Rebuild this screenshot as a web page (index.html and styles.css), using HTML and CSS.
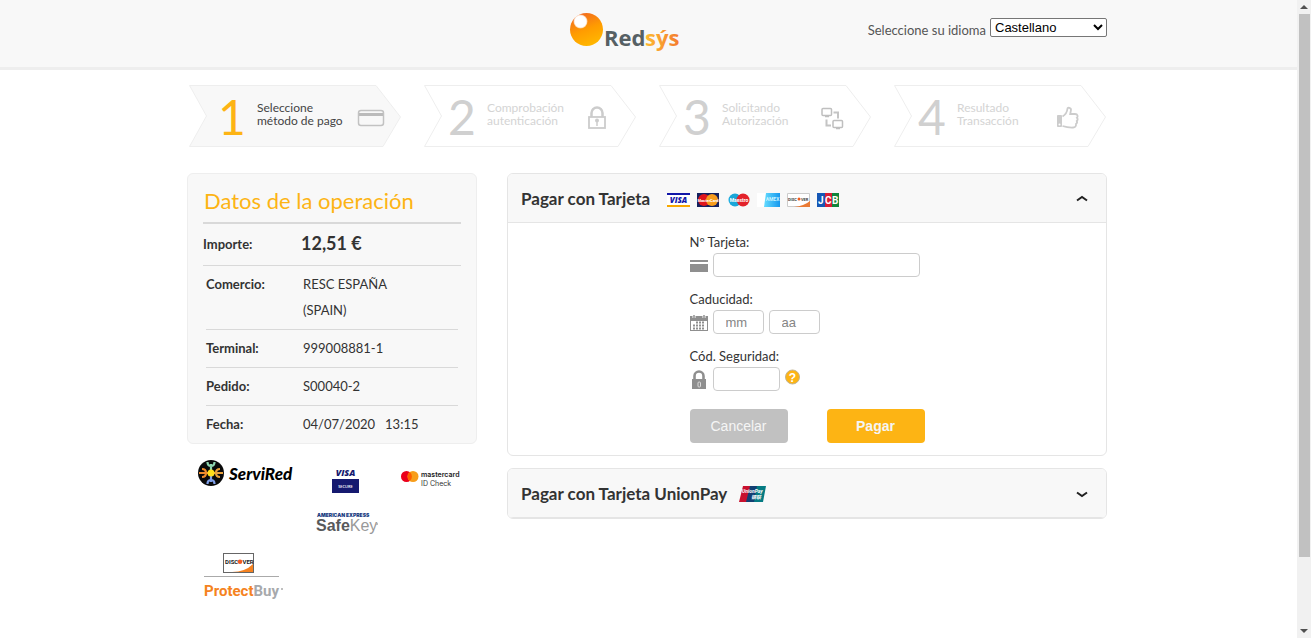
FILE: index.html
```html
<!DOCTYPE html>
<html lang="es">
<head>
<meta charset="utf-8">
<title>Redsys</title>
<link rel="stylesheet" href="styles.css">
</head>
<body>
<div class="page">
  <header class="header">
    <div class="wrap header-inner">
      <svg class="logo" viewBox="0 0 112 42" role="img" aria-label="Redsýs">
        <defs>
          <linearGradient id="ball" x1="0.7" y1="1" x2="0.3" y2="0"><stop offset="0" stop-color="#ffb900"/><stop offset="0.5" stop-color="#ff9c00"/><stop offset="1" stop-color="#f26a21"/></linearGradient>
          <linearGradient id="sys" x1="0" y1="0" x2="1" y2="0"><stop offset="0" stop-color="#fdbb30"/><stop offset="1" stop-color="#f47b30"/></linearGradient>
          <radialGradient id="shine"><stop offset="0.8" stop-color="#fff"/><stop offset="1" stop-color="#fff" stop-opacity="0.5"/></radialGradient>
        </defs>
        <circle cx="17.500" cy="17.500" r="16.500" fill="url(#ball)"/>
        <circle cx="11.500" cy="9.500" r="7" fill="url(#shine)"/>
        <text x="35" y="34" class="logo-text" fill="#566064">Red</text>
        <text x="76" y="34" class="logo-text" fill="url(#sys)">sýs</text>
      </svg>
      <div class="language">
        <label for="idioma">Seleccione su idioma</label>
        <select id="idioma" class="language-select"><option>Castellano</option></select>
      </div>
    </div>
  </header>

  <main class="wrap">
    <ol class="steps">
      <li class="step active">
        <svg class="step-shape" viewBox="0 0 212 62" preserveAspectRatio="none"><path d="M.5.5H187L211.500 32 194 61.500H.5L17.500 31Z"/></svg>
        <div class="step-content"><span class="step-number">1</span><span class="step-label">Seleccione<br>método de pago</span>
          <svg class="step-icon" viewBox="0 0 28 24"><rect x="1.500" y="4.500" width="25" height="15" rx="2.500" fill="none" stroke="#c2c2c2" stroke-width="1.500"/><path d="M2 8.500h24" stroke="#bbb" stroke-width="3"/></svg></div>
      </li>
      <li class="step">
        <svg class="step-shape" viewBox="0 0 212 62" preserveAspectRatio="none"><path d="M.5.5H187L211.500 32 194 61.500H.5L17.500 31Z"/></svg>
        <div class="step-content"><span class="step-number">2</span><span class="step-label">Comprobación<br>autenticación</span>
          <svg class="step-icon" viewBox="0 0 28 24"><path d="M7.500 11V7a5.500 5.500 0 0 1 11 0v4" fill="none" stroke="#ccc" stroke-width="2.500"/><rect x="5" y="11" width="16" height="11" fill="none" stroke="#ccc" stroke-width="1.800"/><circle cx="13" cy="14.500" r="2" fill="#ccc"/><path d="M13 14v6" stroke="#ccc" stroke-width="1.500"/></svg></div>
      </li>
      <li class="step">
        <svg class="step-shape" viewBox="0 0 212 62" preserveAspectRatio="none"><path d="M.5.5H187L211.500 32 194 61.500H.5L17.500 31Z"/></svg>
        <div class="step-content"><span class="step-number">3</span><span class="step-label">Solicitando<br>Autorización</span>
          <svg class="step-icon" viewBox="0 0 28 24"><g fill="none" stroke="#bfbfbf" stroke-width="1.500"><rect x="3" y="2.500" width="9.500" height="7" rx="1"/><rect x="14" y="14.500" width="9.500" height="7" rx="1"/></g><path d="M14.500 6.500h4.500v6M7.500 13.500v6h4.500" fill="none" stroke="#c4c4c4" stroke-width="2"/><path d="M6 10.500h4M17 22.500h4" stroke="#bfbfbf" stroke-width="1.500"/></svg></div>
      </li>
      <li class="step">
        <svg class="step-shape" viewBox="0 0 212 62" preserveAspectRatio="none"><path d="M.5.5H187L211.500 32 194 61.500H.5L17.500 31Z"/></svg>
        <div class="step-content"><span class="step-number">4</span><span class="step-label">Resultado<br>Transacción</span>
          <svg class="step-icon" viewBox="0 0 28 24"><path d="M3.500 9.500h4v11h-4z" fill="#ccc" stroke="#ccc"/><circle cx="5.500" cy="18.500" r="1" fill="#fff"/><path d="M8.500 10.500C11 9 13 7.500 13.500 2.500c.1-1.200 3.700-1.200 3.500 1.500L16.200 8H21c3 0 3 3 2 3.800 1 1 .8 2.300-.2 3.200.6 1.200.2 2.300-.8 3 .3 2-.8 3.500-2.800 3.500-4.500.2-6.700-.2-10.700-1.500" fill="none" stroke="#ccc" stroke-width="1.800"/></svg></div>
      </li>
    </ol>

    <div class="columns">
      <aside class="sidebar">
        <section class="summary">
          <h1 class="summary-title">Datos de la operación</h1>
          <table class="data amount"><tr><th scope="row">Importe:</th><td>12,51 €</td></tr></table>
          <table class="data details">
            <tr><th scope="row">Comercio:</th><td>RESC ESPAÑA<br>(SPAIN)</td></tr>
            <tr><th scope="row">Terminal:</th><td>999008881-1</td></tr>
            <tr><th scope="row">Pedido:</th><td>S00040-2</td></tr>
            <tr><th scope="row">Fecha:</th><td>04/07/2020 &nbsp;&nbsp;13:15</td></tr>
          </table>
        </section>
        <div class="seals">
          <svg class="seal-top" width="98" height="40" viewBox="0 0 98 40" role="img" aria-label="ServiRed">
            <circle cx="13" cy="14" r="13" fill="#0a0a0a"/>
            <g fill="none" stroke-width="2.200"><g stroke="#8fd6b0"><path d="M13 11V5M9.500 3q0 4 3.500 4t3.500-4"/></g><g stroke="#7f9fe8"><path d="M13 17v6M9.500 25q0-4 3.500-4t3.500 4"/></g><g stroke="#ef8c2c"><path d="M10 14H1M4 10q4 0 4 4t-4 4"/></g><g stroke="#e9a13b"><path d="M16 14h9M22 10q-4 0-4 4t4 4"/></g></g>
            <circle cx="13" cy="14" r="3.500" fill="#ffdf1b"/>
            <text x="31" y="21" class="t-servired">ServiRed</text>
          </svg>
          <svg class="seal-top" width="30" height="40" viewBox="0 0 30 40" role="img" aria-label="Visa Secure">
            <text x="13.500" y="17" text-anchor="middle" class="t-visa">VISA</text><rect x="0" y="20" width="27" height="14" fill="#15196f"/><text x="13.500" y="29" text-anchor="middle" class="t-secure">SECURE</text>
          </svg>
          <svg class="seal-top" width="64" height="40" viewBox="0 0 64 40" role="img" aria-label="Mastercard ID Check">
            <circle cx="6.500" cy="17.500" r="5.500" fill="#eb001b"/><circle cx="13" cy="17.500" r="5.500" fill="#f79e1b"/><path d="M9.750 13.100a5.500 5.500 0 0 1 0 8.800 5.500 5.500 0 0 1 0-8.800" fill="#ff5f00"/>
            <text x="21" y="18" class="t-mc">mastercard</text><text x="21" y="27" class="t-id">ID Check</text>
          </svg>
          <svg class="seal-middle" width="64" height="24" viewBox="0 0 64 24" role="img" aria-label="American Express SafeKey">
            <text x="2" y="6" class="t-amex">AMERICAN EXPRESS</text><text x="1" y="20" class="t-safe">Safe<tspan class="t-key">Key</tspan></text><circle cx="62" cy="13" r="1" fill="#aaa"/>
          </svg>
          <svg class="seal-bottom" width="86" height="54" viewBox="0 0 86 54" role="img" aria-label="Discover ProtectBuy">
            <rect x="19.500" y="6.500" width="30" height="19" fill="#fff" stroke="#666"/><path d="M28 25q13 0 21-8V25Z" fill="#f58220"/><text x="21" y="17" class="t-discover">DISC</text><circle cx="36" cy="14.800" r="2.300" fill="#f15a22"/><text x="38.500" y="17" class="t-discover">VER</text>
            <path d="M0 29.500h75" stroke="#aaa"/><text x="0" y="49" class="t-protect">Protect<tspan class="t-buy">Buy</tspan></text><circle cx="78" cy="42" r="1" fill="#aaa"/>
          </svg>
        </div>
      </aside>

      <div class="payments">
        <section class="panel">
          <header class="panel-head">
            <h2 class="panel-title">Pagar con Tarjeta</h2>
            <div class="cards">
              <svg class="card" viewBox="0 0 24 14"><path fill="#fff" d="M0 0h23v14H0z"/><path fill="#1116a8" d="M0 0h23v2H0z"/><path fill="#f7a800" d="M0 12h23v2H0z"/><text x="11.500" y="10" text-anchor="middle" class="c-visa">VISA</text></svg>
              <svg class="card" viewBox="0 0 24 14"><path fill="#14205e" d="M0 0h22v14H0z"/><circle cx="7" cy="7" r="6" fill="#e0161c"/><circle cx="15" cy="7" r="6" fill="#f89c1c"/><text x="11" y="8.500" text-anchor="middle" class="c-brand">MasterCard</text></svg>
              <svg class="card" viewBox="0 0 24 14"><circle cx="8" cy="7" r="6.500" fill="#1aa7d8"/><circle cx="16" cy="7" r="6.500" fill="#e3222a"/><text x="12" y="9" text-anchor="middle" class="c-maestro">Maestro</text></svg>
              <svg class="card" viewBox="0 0 24 14"><defs><linearGradient id="amx"><stop offset="0" stop-color="#65dcff"/><stop offset="1" stop-color="#1698ee"/></linearGradient></defs><path fill="#fff" d="M0 0h9v14H0z"/><path fill="url(#amx)" d="M9 0h14v14H7z"/><text x="15.500" y="8" text-anchor="middle" class="c-amex">AMEX</text></svg>
              <svg class="card" viewBox="0 0 24 14"><path fill="#fff" stroke="#ccc" d="M.5.5h22v13H.5z"/><path d="M7 14q10-1 16-6v6Z" fill="#ea7b35"/><text x="1" y="7.500" class="c-disc">DISC</text><circle cx="12" cy="6" r="1.500" fill="#ef5b1b"/><text x="14" y="7.500" class="c-disc">VER</text></svg>
              <svg class="card" viewBox="0 0 24 14"><path fill="#1557b5" d="M0 0h8v14H0z"/><path fill="#d81e35" d="M8 0h7v14H8z"/><path fill="#11853b" d="M15 0h7v14h-7z"/><text y="11" class="c-jcb"><tspan x="1">J</tspan><tspan x="8">C</tspan><tspan x="15">B</tspan></text></svg>
            </div>
            <button class="toggle" type="button" aria-label="Contraer"><svg width="12" height="8" viewBox="0 0 12 8"><path d="m1 5.500 5-3.500 5 3.500"/></svg></button>
          </header>
          <form class="card-form">
            <div class="field">
              <label for="numero">Nº Tarjeta:</label>
              <div class="control"><svg class="field-icon" viewBox="0 0 18 24"><path d="M0 7h18v2H0zm0 4h18v8H0z" fill="#8f8f8f"/></svg><input id="numero" class="input input-number" type="text"></div>
            </div>
            <div class="field">
              <label for="mes">Caducidad:</label>
              <div class="control"><svg class="field-icon" viewBox="0 0 18 24"><path d="M0 6h18v15H0z" fill="#8f8f8f"/><path d="M1 11h16v9H1z" fill="#fff"/><path d="M6 12.500h9M3 15.500h12M3 18.500h12" stroke="#8f8f8f" stroke-width="2" stroke-dasharray="2 1"/><path d="M4 4.500v3.500M14 4.500v3.500" stroke="#fff" stroke-width="3"/><path d="M4 5v3M14 5v3" stroke="#8f8f8f" stroke-width="1.500"/></svg><input id="mes" class="input input-date" type="text" placeholder="mm"><input class="input input-date" type="text" placeholder="aa" aria-label="Año"></div>
            </div>
            <div class="field">
              <label for="codigo">Cód. Seguridad:</label>
              <div class="control"><svg class="field-icon" viewBox="0 0 18 24"><path d="M4.500 13V9a4.500 4.500 0 0 1 9 0v4" fill="none" stroke="#8f8f8f" stroke-width="2.600"/><path d="M2 12h14v10H2z" fill="#8f8f8f"/><rect x="8" y="15" width="2.500" height="5" rx="1" fill="none" stroke="#ddd"/></svg><input id="codigo" class="input input-code" type="text"><button class="help" type="button" aria-label="Ayuda"><svg width="16" height="16" viewBox="0 0 16 16"><circle cx="7.500" cy="8" r="7" fill="#fdb414" stroke="#c2b491"/><text x="7.500" y="12.500" text-anchor="middle" class="help-mark">?</text></svg></button></div>
            </div>
            <div class="actions"><button class="button cancel" type="button">Cancelar</button><button class="button pay" type="button">Pagar</button></div>
          </form>
        </section>
        <section class="panel closed">
          <header class="panel-head">
            <h2 class="panel-title">Pagar con Tarjeta UnionPay</h2>
            <svg class="unionpay" viewBox="0 0 28 16" role="img" aria-label="UnionPay"><path fill="#c8102e" d="M4 0h8L9 16H0z"/><path fill="#123f73" d="M11 0h8l-3 16H7z"/><path fill="#057b83" d="M18 0h9l-3 16h-9z"/><text x="3" y="7" class="c-union">UnionPay</text><text x="12" y="13" class="c-union">银联</text></svg>
            <button class="toggle" type="button" aria-label="Desplegar"><svg width="12" height="8" viewBox="0 0 12 8"><path d="m1 2.500 5 3.500 5-3.500"/></svg></button>
          </header>
        </section>
      </div>
    </div>
  </main>
</div>
<div class="scrollbar" aria-hidden="true">
  <svg width="14" height="14" viewBox="0 0 14 14"><path d="m3 9 4-4 4 4z" fill="#505050"/></svg>
  <div class="scroll-track"><div class="scroll-thumb"></div></div>
  <svg width="14" height="14" viewBox="0 0 14 14"><path d="m3 5 4 4 4-4z" fill="#505050"/></svg>
</div>
</body>
</html>
```
FILE: styles.css
```css
* { box-sizing: border-box; }
body {
  margin: 0;
  display: flex;
  background: #fff;
  color: #333;
  font: 13px/20px Lato, "Liberation Sans", sans-serif;
}
.page { flex: 1; min-width: 0; }
.wrap { max-width: 923px; margin: 0 auto; padding-right: 3px; }

.header { background: #f8f8f8; border-bottom: 3px solid #eee; }
.header-inner {
  display: grid;
  grid-template-columns: 382fr 112px 426fr;
  padding-top: 12px;
  padding-bottom: 13px;
}
.logo { grid-column: 2; width: 112px; height: 42px; }
.logo-text { font: bold 22px "Open Sans", sans-serif; }
.language {
  display: flex;
  justify-content: flex-end;
  align-items: flex-start;
  gap: 4px;
  padding-top: 6px;
  color: #555;
}
.language label { padding-top: 2px; }
.language-select {
  width: 117px;
  height: 19px;
  padding: 0;
  border: 1px solid #767676;
  border-radius: 2px;
  background-color: #fff;
  color: #000;
  font: 13px "Liberation Sans", Arial, sans-serif;
}

.steps {
  display: grid;
  grid-template-columns: repeat(4, 1fr);
  column-gap: 23px;
  margin: 15px 0 26px;
  padding: 0 1px 0 2px;
  list-style: none;
}
.step { display: grid; color: #d4d4d4; }
.step-shape, .step-content { grid-area: 1 / 1; }
.step-shape { width: 100%; height: 62px; fill: #fff; stroke: #eee; }
.step-content { display: flex; align-items: center; padding: 0 24px; }
.step-number { width: 29px; font-size: 48px; line-height: 64px; height: 62px; color: #d0d0d0; }
.step-label { flex: 1; padding: 0 0 5px 10px; font-size: 12px; line-height: 13px; }
.step-icon { width: 28px; height: 24px; margin-top: 4px; }
.step.active { color: #444; }
.step.active .step-shape { fill: #f8f8f8; }
.step.active .step-content { padding: 0 16px 0 29px; }
.step.active .step-number { color: #fdb414; }

.columns { display: grid; grid-template-columns: 290px 1fr; column-gap: 30px; align-items: start; }
.summary { padding: 11px 15px 0; background: #f8f8f8; border: 1px solid #eee; border-radius: 6px; }
.summary-title {
  margin: 0;
  padding: 0 0 5px 1px;
  border-bottom: 2px solid #d9d9d9;
  color: #fdb414;
  font-size: 22px;
  font-weight: 400;
  line-height: 32px;
}
.data { border-collapse: collapse; border-spacing: 0; table-layout: fixed; width: 258px; line-height: 26px; }
.data th { width: 97px; padding: 0; text-align: left; vertical-align: top; font-weight: 700; }
.data td { padding: 0; vertical-align: top; }
.amount { border-bottom: 1px solid #d9d9d9; }
.amount th, .amount td { height: 41px; vertical-align: middle; }
.amount td { padding: 0 0 2px 1px; font-size: 18px; font-weight: 700; }
.details { width: 252px; margin: 0 3px; }
.details th, .details td { padding: 5px 0 6px; }
.details tr + tr { border-top: 1px solid #d9d9d9; }

.seals { display: grid; grid-template-columns: 120px 80px 90px; row-gap: 12px; justify-items: center; padding-top: 15px; }
.seal-middle { grid-column: 2; }
.seal-bottom { grid-column: 1; }
.t-servired { font: italic 900 17px Lato, sans-serif; fill: #000; }
.t-visa { font: italic 900 9px "Open Sans", sans-serif; fill: #15196f; }
.t-secure { font: 600 4px "Open Sans", sans-serif; fill: #fff; }
.t-mc { font: 600 7px Inter, sans-serif; fill: #222; }
.t-id { font: 400 7px Inter, sans-serif; fill: #333; }
.t-amex { font: 900 5px Inter, sans-serif; fill: #14377d; }
.t-safe { font: 600 16px "Liberation Sans", sans-serif; fill: #58595b; }
.t-key { font-weight: 400; fill: #999; }
.t-discover { font: 700 6px Roboto, sans-serif; fill: #222; }
.t-protect { font: 700 15px Roboto, sans-serif; fill: #f58220; }
.t-buy { fill: #a7a9ac; }

.payments { display: grid; row-gap: 12px; }
.panel { border: 1px solid #e5e5e5; border-radius: 6px; overflow: hidden; }
.panel-head {
  display: flex;
  align-items: center;
  height: 49px;
  padding: 2px 13px 0;
  background: #f8f8f8;
  border-bottom: 1px solid #e5e5e5;
}
.panel-title { margin: 0; font-size: 17px; font-weight: 700; line-height: 24px; }
.cards { display: flex; gap: 6px; margin: 1px 0 0 17px; }
.card { width: 24px; height: 14px; }
.unionpay { width: 28px; height: 16px; margin-left: 12px; }
.toggle { display: grid; place-items: center; width: 22px; height: 24px; margin-left: auto; padding: 0; border: 0; background: none; }
.toggle path { fill: none; stroke: #222; stroke-width: 2; }
.c-visa { font: italic 800 8px "Open Sans", sans-serif; fill: #1116a8; }
.c-brand { font: 700 4px Roboto, sans-serif; fill: #fff; }
.c-maestro { font: 700 5px Roboto, sans-serif; fill: #fff; }
.c-amex { font: 700 5px Roboto, sans-serif; fill: #c9f2ff; }
.c-disc { font: 700 4px Roboto, sans-serif; fill: #444; }
.c-jcb { font: 700 10px Roboto, sans-serif; fill: #fff; }
.c-union { font: italic 700 5px Roboto, "Noto Sans CJK SC", sans-serif; fill: #fff; }

.card-form { width: 235px; margin: 0 auto; padding: 9px 0 12px; }
.field { margin-bottom: 12px; }
.field label { display: block; margin-bottom: 1px; }
.control { display: flex; gap: 5px; }
.field-icon { width: 18px; height: 24px; }
.input {
  height: 24px;
  padding: 0 12px;
  border: 1px solid #ccc;
  border-radius: 4px;
  background: #fff;
  font: 13px "Liberation Sans", Arial, sans-serif;
}
.input::placeholder { color: #858585; }
.input-number { width: 207px; }
.input-date { width: 51px; }
.input-code { width: 67px; }
.help { width: 16px; height: 16px; margin-top: 2px; padding: 0; border: 0; background: none; }
.help svg { display: block; }
.help-mark { font: 700 12px "Liberation Sans", sans-serif; fill: #fff; }
.actions { display: flex; justify-content: space-between; padding-top: 6px; }
.button {
  width: 98px;
  height: 34px;
  padding: 0;
  border: 0;
  border-radius: 4px;
  color: #f5f5f5;
  font: 14px "Liberation Sans", Arial, sans-serif;
}
.cancel { background: #c1c1c1; }
.pay { background: #fdb414; font-weight: 700; }

.scrollbar { position: sticky; top: 0; display: flex; flex-direction: column; width: 14px; height: 100vh; background: #f1f1f1; }
.scroll-track { flex: 1; padding: 0 1px 0 2px; }
.scroll-thumb { height: 89%; background: #c1c1c1; }
```
